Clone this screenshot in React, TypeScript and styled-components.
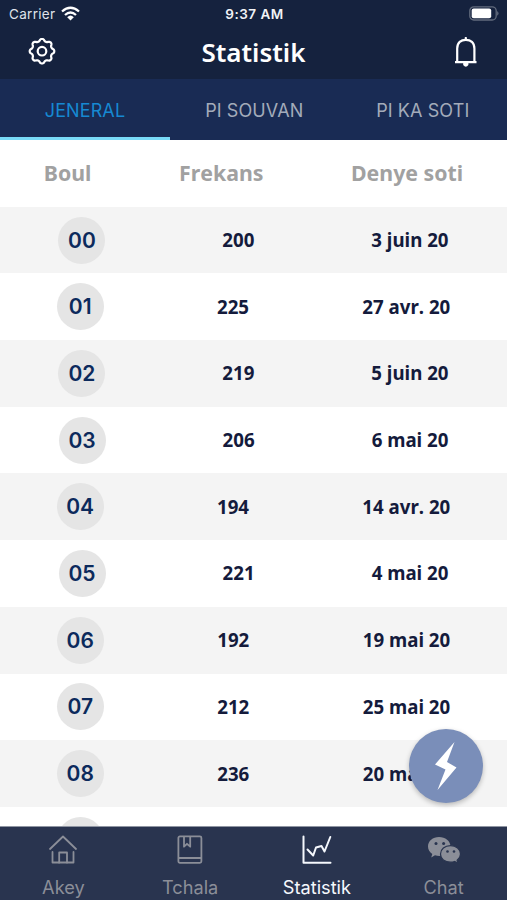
import React from 'react';
import styled, { createGlobalStyle } from 'styled-components';

const GlobalStyle = createGlobalStyle`
  * { box-sizing: border-box; }
  body { margin: 0; background: #fff; }
`;

const Screen = styled.div`
  position: relative;
  display: flex;
  flex-direction: column;
  width: 507px;
  height: 900px;
  overflow: hidden;
  background: #fff;
  font-family: 'Inter', sans-serif;
`;

const Header = styled.header`
  flex: none;
  height: 79px;
  background: #15223e;
  color: #fff;
`;

const StatusBar = styled.div`
  display: grid;
  grid-template-columns: 1fr auto 1fr;
  align-items: center;
  height: 27px;
  padding: 0 7px 0 9px;
`;

const Carrier = styled.div`
  display: flex;
  align-items: center;
  gap: 6px;
  font-size: 13.5px;
  letter-spacing: 0.3px;
  color: #dfe3ea;
`;

const Clock = styled.div`
  font-size: 13.5px;
  font-weight: 600;
  letter-spacing: 0.5px;
  color: #f1f3f6;
`;

const BatterySlot = styled.div`
  display: flex;
  justify-content: flex-end;
`;

const TitleBar = styled.div`
  display: grid;
  grid-template-columns: 1fr auto 1fr;
  align-items: center;
  height: 50px;
  padding: 0 28px;
`;

const Title = styled.h1`
  margin: 0;
  font: 600 26px/36px 'Noto Sans', sans-serif;
`;

const IconSlot = styled.div<{ $end?: boolean }>`
  display: flex;
  justify-content: ${({ $end }) => ($end ? 'flex-end' : 'flex-start')};
`;

const Tabs = styled.nav`
  flex: none;
  display: grid;
  grid-template-columns: 170px 1fr 1fr;
  height: 61px;
  background: #192b54;
`;

const Tab = styled.div<{ $active?: boolean }>`
  display: flex;
  align-items: center;
  justify-content: center;
  padding-top: 4px;
  font-size: 18px;
  letter-spacing: 0.1px;
  color: ${({ $active }) => ($active ? '#1689d2' : '#a3abba')};
  border-bottom: 3px solid ${({ $active }) => ($active ? '#78daf8' : 'transparent')};
`;

const Table = styled.main`
  flex: 1;
  min-height: 0;
  overflow: hidden;
`;

const Row = styled.div<{ $shaded?: boolean }>`
  display: flex;
  align-items: center;
  justify-content: space-around;
  height: 66.7px;
  background: ${({ $shaded }) => ($shaded ? '#f4f4f4' : '#fff')};
  color: #141b3c;
  font: 700 18.7px/26px 'Noto Sans', sans-serif;
  font-kerning: none;
`;

const HeadRow = styled(Row)`
  color: #a1a1a1;
  font-size: 21.3px;
`;

const Ball = styled.span`
  display: flex;
  align-items: center;
  justify-content: center;
  width: 47px;
  height: 47px;
  padding-top: 1px;
  border-radius: 50%;
  background: #e5e5e5;
  color: #0c2a5c;
  font: 600 21px/26px 'Inter', sans-serif;
`;

const BottomBar = styled.nav`
  flex: none;
  display: grid;
  grid-template-columns: repeat(4, 1fr);
  height: 74px;
  background: #29344f;
  border-top: 1px solid #8f95a2;
`;

const NavItem = styled.div<{ $active?: boolean }>`
  display: flex;
  flex-direction: column;
  align-items: center;
  padding-top: 7px;
  gap: 10px;
  color: ${({ $active }) => ($active ? '#f5f8fd' : '#8b8e98')};
  font-size: 18.2px;
  line-height: 26px;
`;

const Fab = styled.button`
  position: absolute;
  left: 409px;
  top: 729px;
  display: flex;
  align-items: center;
  justify-content: center;
  width: 74px;
  height: 74px;
  padding: 0;
  border: 0;
  border-radius: 50%;
  background: #7a8eb9;
  box-shadow: 0 2px 5px rgba(0, 0, 0, 0.25);
`;

const WifiIcon = () => (
  <svg width="19" height="15" viewBox="0 0 19 15" fill="none" stroke="#fff" strokeWidth="2.3">
    <path d="M1 5.5Q9.5-2 18 5.5" />
    <path d="M4 9Q9.5 4 15 9" />
    <path d="M6.2 11.2Q9.5 8 12.8 11.2L9.5 14.5Z" fill="#fff" stroke="none" />
  </svg>
);

const BatteryIcon = () => (
  <svg width="31" height="15" viewBox="0 0 31 15">
    <rect x="0.8" y="0.8" width="26.4" height="13.2" rx="4" fill="none" stroke="#626b7d" strokeWidth="1.3" />
    <rect x="2.7" y="2.6" width="19.5" height="9.6" rx="2" fill="#fff" />
    <path d="M28.4 5Q30.5 7.4 28.4 9.8Z" fill="#818998" />
  </svg>
);

const gearPath = (() => {
  const points: string[] = [];
  for (let i = 0; i <= 96; i++) {
    const a = (i / 96) * Math.PI * 2;
    const wave = Math.cos(8 * a);
    const r = 11.2 + 1.1 * Math.sign(wave) * Math.pow(Math.abs(wave), 0.6);
    points.push(`${(14 + r * Math.sin(a)).toFixed(2)} ${(13.2 - r * Math.cos(a)).toFixed(2)}`);
  }
  return `M${points.join('L')}Z`;
})();

const GearIcon = () => (
  <svg width="28" height="28" viewBox="0 0 28 28" fill="none" stroke="#fff" strokeWidth="2.2" strokeLinejoin="round">
    <path d={gearPath} />
    <circle cx="14" cy="13.2" r="4.3" />
  </svg>
);

const BellIcon = () => (
  <svg width="25" height="31" viewBox="0 0 25 31" fill="none" stroke="#fff" strokeWidth="2.2" strokeLinejoin="round">
    <path d="M1 25.2H22.5M3.2 25.2V11.5C3.2 5.5 7 2.8 11.8 2.8S20.4 5.5 20.4 11.5V25.2" />
    <path d="M11.8 1V3" strokeLinecap="round" />
    <path d="M9.2 26V28Q11.8 31.5 14.4 28V26Z" fill="#fff" stroke="none" />
  </svg>
);

const BoltIcon = () => (
  <svg width="22" height="48" viewBox="0 0 22 48" fill="#fff">
    <path d="M19.5 0L0 22.5L10.5 27.5L2.5 48L21.5 25.5L12 20Z" />
  </svg>
);

const HomeIcon = () => (
  <svg width="28" height="30" viewBox="0 0 28 30" fill="none" stroke="currentColor" strokeWidth="1.8" strokeLinecap="round" strokeLinejoin="round">
    <path d="M1 15L14 2.5L27 15M3.5 18V28.5H10.2V18.5H18V28.5H24.5V18" />
    <path d="M10 28.5H18" />
  </svg>
);

const BookIcon = () => (
  <svg width="28" height="30" viewBox="0 0 28 30" fill="none" stroke="currentColor" strokeWidth="1.8" strokeLinejoin="round">
    <rect x="2.4" y="2.4" width="23" height="26.4" rx="1.5" />
    <path d="M2.4 24H25.4M8 2.4V12.7L11 9.8L14.2 12.7V2.4" />
  </svg>
);

const ChartIcon = () => (
  <svg width="30" height="30" viewBox="0 0 30 30" fill="none" stroke="currentColor" strokeWidth="2" strokeLinecap="round" strokeLinejoin="round">
    <path d="M1.5 2.5V28.8H28.5" />
    <path d="M5.5 15.5L11.2 21.5L14 13.5L19.5 12L22.5 17.5L28.3 3" />
  </svg>
);

const ChatIcon = () => (
  <svg width="34" height="30" viewBox="0 0 34 30" fill="currentColor">
    <path d="M12 3C5.8 3 1 7 1 12.6C1 15.6 2.7 18.3 5.3 20.1L4.2 23.4L8 21.3Q10 22 12.7 22C18.6 22 23.5 18 23.5 12.5C23.5 7 18.3 3 12 3Z" />
    <path d="M23.5 11.6C17.8 11.6 13.5 15.2 13.5 20S17.8 28.2 23.5 28.2Q25.8 28.2 27.6 27.5L31 29.3L30.1 26.2C32.2 24.7 33.5 22.5 33.5 20C33.5 15.2 29.1 11.6 23.5 11.6Z" stroke="#29344f" strokeWidth="1.2" />
    <g fill="#29344f">
      <circle cx="9" cy="9.5" r="1.5" />
      <circle cx="16.6" cy="9.5" r="1.5" />
      <circle cx="20.5" cy="17.5" r="1.3" />
      <circle cx="27" cy="17.5" r="1.3" />
    </g>
  </svg>
);

const draws = [
  ['00', '200', '3 juin 20'],
  ['01', '225', '27 avr. 20'],
  ['02', '219', '5 juin 20'],
  ['03', '206', '6 mai 20'],
  ['04', '194', '14 avr. 20'],
  ['05', '221', '4 mai 20'],
  ['06', '192', '19 mai 20'],
  ['07', '212', '25 mai 20'],
  ['08', '236', '20 mai 20'],
  ['09', '215', '25 mai 20'],
];

export default function App() {
  return (
    <Screen>
      <GlobalStyle />
      <Header>
        <StatusBar>
          <Carrier>Carrier <WifiIcon /></Carrier>
          <Clock>9:37 AM</Clock>
          <BatterySlot><BatteryIcon /></BatterySlot>
        </StatusBar>
        <TitleBar>
          <IconSlot><GearIcon /></IconSlot>
          <Title>Statistik</Title>
          <IconSlot $end><BellIcon /></IconSlot>
        </TitleBar>
      </Header>
      <Tabs>
        <Tab $active>JENERAL</Tab>
        <Tab>PI SOUVAN</Tab>
        <Tab>PI KA SOTI</Tab>
      </Tabs>
      <Table>
        <HeadRow>
          <span>Boul</span>
          <span>Frekans</span>
          <span>Denye soti</span>
        </HeadRow>
        {draws.map(([ball, count, date], i) => (
          <Row key={ball} $shaded={i % 2 === 0}>
            <Ball>{ball}</Ball>
            <span>{count}</span>
            <span>{date}</span>
          </Row>
        ))}
      </Table>
      <BottomBar>
        <NavItem><HomeIcon />Akey</NavItem>
        <NavItem><BookIcon />Tchala</NavItem>
        <NavItem $active><ChartIcon />Statistik</NavItem>
        <NavItem><ChatIcon />Chat</NavItem>
      </BottomBar>
      <Fab aria-label="Flash"><BoltIcon /></Fab>
    </Screen>
  );
}
